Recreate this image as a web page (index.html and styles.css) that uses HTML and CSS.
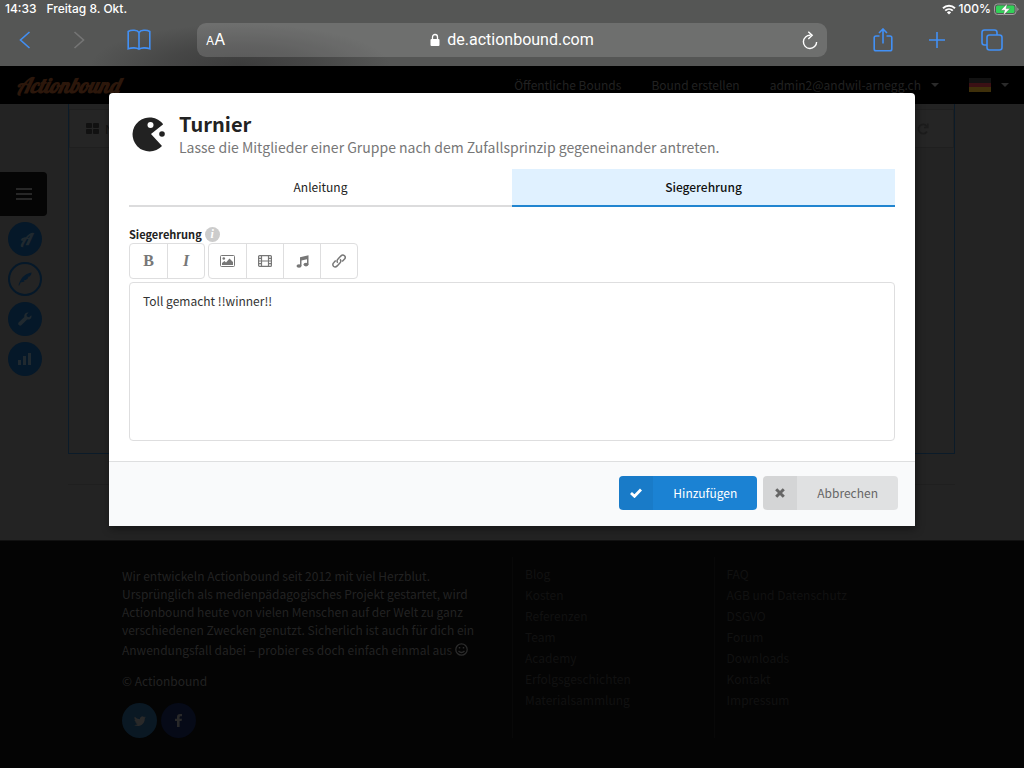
FILE: index.html
```html
<!DOCTYPE html>
<html lang="de">
<head>
  <meta charset="UTF-8" />
  <meta name="viewport" content="width=device-width, initial-scale=1" />
  <title>Actionbound</title>
  <link rel="stylesheet" href="styles.css">
</head>
<body>

  <header class="chrome">
    <div class="status">
      <span>14:33</span>
      <span>Freitag 8. Okt.</span>
      <span class="status-right">
        <svg width="14" height="11" viewBox="0 0 14 11" fill="none" stroke="#fff" stroke-width="1.9"><path d="M1 4.2a8.6 8.6 0 0 1 12 0M3.2 6.6a5.5 5.5 0 0 1 7.6 0"/><path d="M7 10.5L4.9 8.4a3 3 0 0 1 4.2 0z" fill="#fff" stroke="none"/></svg>
        <span>100%</span>
        <svg width="25" height="13" viewBox="0 0 25 13"><rect x=".5" y="1" width="21.5" height="10.500" rx="3" fill="none" stroke="#a0a0a0"/><rect x="2" y="2.500" width="18.500" height="7.500" rx="1.500" fill="#32d158"/><path d="M23.300 4.500v3.500q1.200-.5 1.200-1.750t-1.200-1.750z" fill="#a0a0a0"/><path d="M13.300.5L6.800 7.200h3.800L9.300 12.500l6.700-6.900h-3.900z" fill="#fff" stroke="#555" stroke-width=".4"/></svg>
      </span>
    </div>
    <div class="toolbar">
      <div class="tools">
        <button class="tool" aria-label="Zurück"><svg width="12" height="18" viewBox="0 0 12 18"><path d="M10.500 1L1.500 9l9 8"/></svg></button>
        <button class="tool tool-off" aria-label="Vorwärts"><svg width="12" height="18" viewBox="0 0 12 18"><path d="M1.500 1l9 8-9 8"/></svg></button>
        <button class="tool" aria-label="Lesezeichen"><svg width="24" height="22" viewBox="0 0 24 22"><path d="M12 3.500C10.500 1 4.500.5 1.200 2.500v17.300c3.500-1.300 8.500-1.300 10.800.4 2.300-1.700 7.300-1.700 10.800-.4V2.500C19.500.5 13.500 1 12 3.500zM12 3.500v16.500"/></svg></button>
      </div>
      <div class="address">
        <button class="reader" aria-label="Textgröße"><small>A</small>A</button>
        <a class="url" href="#"><svg width="10" height="14" viewBox="0 0 10 14"><rect x=".5" y="6" width="9" height="7" rx="1" fill="#fff"/><path d="M2.500 6.500V4a2.500 2.500 0 0 1 5 0v2.500" fill="none" stroke="#fff" stroke-width="1.300"/></svg>de.actionbound.com</a>
        <button class="reload" aria-label="Neu laden"><svg width="16" height="19" viewBox="0 0 16 19" fill="none" stroke="#fff" stroke-width="1.400"><path d="M8.500 4.300a6.600 6.600 0 1 0 6.100 6.600M6.300.8l3.900 3.500-3.900 3.700"/></svg></button>
      </div>
      <div class="tools tools-right">
        <button class="tool" aria-label="Teilen"><svg width="20" height="24" viewBox="0 0 20 24"><path d="M6.500 8H3Q1.200 8 1.200 9.800V21Q1.200 22.800 3 22.800H17Q18.800 22.800 18.800 21V9.800Q18.800 8 17 8H13.500M10 15.500V1.500M6 5l4-4 4 4"/></svg></button>
        <button class="tool" aria-label="Neuer Tab"><svg width="18" height="18" viewBox="0 0 18 18"><path d="M9 1v16M1 9h16"/></svg></button>
        <button class="tool" aria-label="Tabs"><svg width="22" height="22" viewBox="0 0 22 22"><rect x="6" y="6" width="15" height="15" rx="2.500"/><path d="M6 16H3.500Q1 16 1 13.500V3.500Q1 1 3.500 1H13.500Q16 1 16 3.500V6"/></svg></button>
      </div>
    </div>
  </header>

  <div class="page">
    <nav class="navbar">
      <a class="logo" href="#">Actionbound</a>
      <div class="nav-links">
        <a href="#">Öffentliche Bounds</a>
        <a href="#">Bound erstellen</a>
        <a href="#">admin2@andwil-arnegg.ch <i class="caret"></i></a>
        <a href="#" aria-label="Sprache"><span class="flag"></span> <i class="caret"></i></a>
      </div>
    </nav>

    <main class="main">
      <aside class="sidebar">
        <button class="burger" aria-label="Menü"><svg width="16" height="12" viewBox="0 0 16 12" stroke="#272727" stroke-width="2"><path d="M0 1h16M0 6h16M0 11h16"/></svg></button>
        <a class="round letter" href="#">A</a>
        <a class="round round-active" href="#" aria-label="Bearbeiten"><svg width="14" height="14" viewBox="0 0 14 14" fill="#061a2c"><path d="M.5 13.500C2 7.500 5.500 2 13.500.5c0 2-1 3.300-2 4l-2.500.6 1.500.4c-.8 1.300-1.800 2-2.800 2.600l-2.200.2 1.200.6C5.300 10 4 10.300 2.800 10.300L1.200 13.500z"/></svg></a>
        <a class="round" href="#" aria-label="Einstellungen"><svg width="14" height="14" viewBox="0 0 14 14"><path d="M13.300 3.200L11 5.200 8.900 4.600 8.500 2.700 10.700.5C8 0 5.700 2.200 6.300 5L.8 10.300a1.900 1.900 0 0 0 2.800 2.800L9.200 7.500c2.800.6 5-1.700 4.100-4.300z" fill="#20292f"/></svg></a>
        <a class="round" href="#" aria-label="Resultate"><svg width="14" height="14" viewBox="0 0 14 14" fill="#20292f"><path d="M0 8h3v5H0zM5 4h3v9H5zM10 1h3v12h-3z"/></svg></a>
      </aside>
      <div class="content">
        <section class="board">
          <div class="board-bar">
            <svg width="13" height="11" viewBox="0 0 13 11" fill="#111"><rect width="6" height="5" rx="1"/><rect x="7" width="6" height="5" rx="1"/><rect y="6" width="6" height="5" rx="1"/><rect x="7" y="6" width="6" height="5" rx="1"/></svg>
            <span>Neu</span>
            <svg class="board-reload" width="12" height="12" viewBox="0 0 12 12" fill="none" stroke="#1c1c1c" stroke-width="1.700"><path d="M10 8.500a4.600 4.600 0 1 1-.3-5.300M10.800.5v4H7"/></svg>
          </div>
        </section>
        <hr>
      </div>
    </main>

    <footer class="footer">
      <div class="footer-grid">
        <div class="about">
          <p>Wir entwickeln Actionbound seit 2012 mit viel Herzblut. Ursprünglich als medienpädagogisches Projekt gestartet, wird Actionbound heute von vielen Menschen auf der Welt zu ganz verschiedenen Zwecken genutzt. Sicherlich ist auch für dich ein Anwendungsfall dabei – probier es doch einfach einmal aus <svg class="smile" width="13" height="13" viewBox="0 0 13 13" fill="none" stroke="#2b2b2b" stroke-width="1.300"><circle cx="6.500" cy="6.500" r="5.700"/><path d="M3.500 8q3 3 6 0"/><path d="M4.500 4v1.500M8.500 4v1.500" stroke-width="1.500"/></svg></p>
          <p>© Actionbound</p>
          <div class="social">
            <a class="twitter" href="#" aria-label="Twitter"><svg width="12" height="10" viewBox="0 0 12 10" fill="#292929"><path d="M12 1.200l-1.200 1.300C10.900 7 7.500 10 3.800 10 2.400 10 1.100 9.600 0 8.900c1.300.1 2.600-.2 3.600-1A2.500 2.500 0 0 1 1.300 6.200h1.100A2.500 2.500 0 0 1 .4 3.700l1.100.3A2.500 2.500 0 0 1 .8.700a7 7 0 0 0 5.100 2.600A2.500 2.500 0 0 1 10 1l1.600-.6-1.100 1.400z"/></svg></a>
            <a class="facebook" href="#" aria-label="Facebook"><svg width="7" height="13" viewBox="0 0 7 13" fill="#292929"><path d="M2 13V7H0V4.700h2V3Q2 0 5 0h2v2.200H5.600Q4.600 2.200 4.600 3.200v1.500H7L6.600 7h-2v6z"/></svg></a>
          </div>
        </div>
        <ul>
          <li><a href="#">Blog</a></li>
          <li><a href="#">Kosten</a></li>
          <li><a href="#">Referenzen</a></li>
          <li><a href="#">Team</a></li>
          <li><a href="#">Academy</a></li>
          <li><a href="#">Erfolgsgeschichten</a></li>
          <li><a href="#">Materialsammlung</a></li>
        </ul>
        <ul>
          <li><a href="#">FAQ</a></li>
          <li><a href="#">AGB und Datenschutz</a></li>
          <li><a href="#">DSGVO</a></li>
          <li><a href="#">Forum</a></li>
          <li><a href="#">Downloads</a></li>
          <li><a href="#">Kontakt</a></li>
          <li><a href="#">Impressum</a></li>
        </ul>
      </div>
    </footer>

    <div class="dimmer">
      <div class="modal" role="dialog" aria-labelledby="modal-title">
        <div class="modal-body">
          <div class="modal-head">
            <svg width="34" height="36" viewBox="0 0 34 36"><path d="M19 18L31.200 8.300A17 17 0 1 0 30 30z" fill="#222"/><circle cx="18.500" cy="9" r="3" fill="#fff"/><circle cx="30" cy="18" r="2.800" fill="#222"/></svg>
            <div>
              <h1 id="modal-title">Turnier</h1>
              <p>Lasse die Mitglieder einer Gruppe nach dem Zufallsprinzip gegeneinander antreten.</p>
            </div>
          </div>

          <div class="tabs">
            <button class="tab">Anleitung</button>
            <button class="tab tab-active">Siegerehrung</button>
          </div>

          <div class="field-label">
            <label for="award">Siegerehrung</label>
            <span class="info">i</span>
          </div>
          <div class="editor-bar">
            <div class="group">
              <button class="bold">B</button>
              <button class="italic">I</button>
            </div>
            <div class="group">
              <button aria-label="Bild"><svg width="15" height="12" viewBox="0 0 15 12"><rect x=".5" y=".5" width="14" height="11" rx="1" fill="none" stroke="#777"/><circle cx="3.800" cy="3.500" r="1.300" fill="#777"/><path d="M2 10V8l2.500-2L6 7.500 9.500 3.500 13 7v3z" fill="#777"/></svg></button>
              <button aria-label="Video"><svg width="14" height="12" viewBox="0 0 14 12" fill="none" stroke="#777" stroke-width="1.200"><rect x=".6" y=".6" width="12.800" height="10.800" rx="1"/><path d="M3.500.6v10.800M10.500.6v10.800M3.500 6h7M.6 3.300h2.900M.6 6h2.900M.6 8.700h2.900M10.500 3.300h2.900M10.500 6h2.900M10.500 8.700h2.900"/></svg></button>
              <button aria-label="Audio"><svg width="13" height="13" viewBox="0 0 13 13" fill="#777"><path d="M4 2.200L12.500.3V9.500H11V4.200L5.500 5.500v5.500H4z"/><ellipse cx="3" cy="11" rx="2.500" ry="1.800"/><ellipse cx="10" cy="9.600" rx="2.500" ry="1.800"/></svg></button>
              <button aria-label="Link"><svg width="14" height="14" viewBox="0 0 14 14" fill="none" stroke="#777" stroke-width="1.500"><path d="M5.800 8.800C4.700 7.700 4.900 6.200 5.800 5.300L8.800 2.100C10 .9 11.500.9 12.500 1.800c1 1 .8 2.500-.2 3.500L10.200 7.500M8 5.300c1.200 1 1 2.600.1 3.500L5.200 11.900c-1.200 1.200-2.700 1.200-3.700.3-1-1-.8-2.500.2-3.500L3.700 6.600"/></svg></button>
            </div>
          </div>
          <textarea id="award">Toll gemacht !!winner!!</textarea>
        </div>
        <div class="modal-foot">
          <button class="btn btn-primary"><span class="btn-icon"><svg width="12" height="10" viewBox="0 0 12 10"><path d="M1 5l3.500 3.300L11 1.500" fill="none" stroke="#fff" stroke-width="2.800"/></svg></span><span class="btn-text">Hinzufügen</span></button>
          <button class="btn"><span class="btn-icon"><svg width="10" height="10" viewBox="0 0 10 10"><path d="M1.200 1.200l7.600 7.600M8.800 1.200L1.200 8.800" stroke="#666" stroke-width="3"/></svg></span><span class="btn-text">Abbrechen</span></button>
        </div>
      </div>
    </div>
  </div>

</body>
</html>
```
FILE: styles.css
```css
* { box-sizing: border-box; }
body {
  margin: 0;
  background: #040404;
  font-family: "Noto Sans CJK SC", "Noto Sans", sans-serif;
  font-size: 12px;
  line-height: 18px;
  color: #222;
}
a { color: inherit; text-decoration: none; }
button {
  font: inherit;
  color: inherit;
  background: none;
  border: 0;
  padding: 0;
  cursor: pointer;
}
svg { flex: none; }

/* browser bar */
.chrome {
  height: 66px;
  background: radial-gradient(ellipse 150px 42px at 240px 66px, #3c3c3c, rgba(60, 60, 60, 0.6) 50%, transparent), #555655;
  font-family: Inter, sans-serif;
  color: #fff;
}
.status {
  display: flex;
  gap: 10px;
  padding: 0 5px;
  font-weight: 500;
}
.status-right {
  display: flex;
  align-items: center;
  gap: 3px;
  margin-left: auto;
}
.toolbar {
  display: flex;
  align-items: center;
  gap: 46px;
  padding: 5px 21px 0 19px;
}
.tools {
  display: flex;
  align-items: center;
  gap: 42px;
}
.tools-right { gap: 35px; }
.tool { display: flex; }
.tool svg {
  fill: none;
  stroke: #4290f5;
  stroke-width: 1.6;
}
.tool-off svg { stroke: #757575; }
.address {
  flex: 1;
  display: flex;
  align-items: center;
  height: 34px;
  padding: 0 9px;
  border-radius: 9px;
  background: rgba(255, 255, 255, 0.15);
}
.reader {
  flex: 1;
  font-size: 16px;
  text-align: left;
}
.reader small { font-size: 12px; }
.url {
  display: flex;
  align-items: center;
  gap: 7px;
  font-family: Roboto, sans-serif;
  font-size: 16px;
}
.reload {
  flex: 1;
  display: flex;
  justify-content: flex-end;
}

/* site */
.page { position: relative; }
.navbar {
  display: flex;
  align-items: center;
  justify-content: space-between;
  height: 38px;
  padding: 0 15px 0 16px;
  background: #000;
  color: #222;
}
.logo {
  font-family: Lobster, "Liberation Serif", serif;
  font-size: 21px;
  font-style: italic;
  font-weight: bold;
  color: #2c170b;
}
.nav-links { display: flex; gap: 30px; }
.nav-links a { display: flex; align-items: center; }
.caret {
  margin-left: 10px;
  border: 4px solid transparent;
  border-top-color: #2a2a2a;
  border-bottom: 0;
}
.flag {
  width: 22px;
  height: 14px;
  background: linear-gradient(#121212 33%, #3a1014 33%, #3a1014 66%, #3f300b 66%);
}
.main {
  display: flex;
  min-height: 436px;
  padding-right: 69px;
  background: #232323;
}
.sidebar {
  display: flex;
  flex-direction: column;
  gap: 6px;
  width: 68px;
  padding-top: 68px;
}
.burger {
  display: flex;
  align-items: center;
  justify-content: center;
  width: 47px;
  height: 44px;
  border-radius: 0 4px 4px 0;
  background: #050505;
}
.round {
  display: flex;
  align-items: center;
  justify-content: center;
  width: 34px;
  height: 34px;
  margin-left: 8px;
  border-radius: 50%;
  background: #051829;
}
.letter {
  font: italic bold 16px Lobster, "Liberation Serif", serif;
  color: #20292f;
}
.round-active {
  border: 2px solid #051829;
  background: #242424;
}
.content { flex: 1; }
.board {
  height: 350px;
  padding-top: 5px;
  border: 1px solid #0b1b29;
  border-top: 0;
}
.board-bar {
  display: flex;
  align-items: center;
  gap: 6px;
  height: 39px;
  padding: 0 24px 0 16px;
  border: 1px solid #1f1f1f;
  background: #252525;
  color: #111;
}
.board-reload { margin-left: auto; }
.content hr {
  margin: 30px 0 0;
  border: 0;
  border-top: 1px solid #1f1f1f;
}
.footer {
  padding: 16px 20px 24px;
  border-top: 1px solid #111;
  background: #040404;
  color: #222;
}
.footer-grid {
  display: grid;
  grid-template-columns: 2fr 1fr 1fr;
  max-width: 806px;
  margin: 0 auto;
}
.about { padding: 10px 34px 0 13px; }
.about p { margin: 0 0 13px; }
.smile {
  margin-top: 4px;
  vertical-align: -1px;
}
.footer ul {
  margin: 0;
  padding: 6px 12px;
  border-left: 1px solid #080808;
  list-style: none;
  line-height: 21px;
  color: #111;
}
.social { display: flex; gap: 4px; }
.social a {
  display: flex;
  align-items: center;
  justify-content: center;
  width: 35px;
  height: 35px;
  border-radius: 50%;
}
.twitter { background: #0a1823; }
.facebook { background: #060a17; }

/* modal */
.dimmer {
  position: absolute;
  top: 0;
  left: 0;
  right: 0;
  padding: 27px 20px;
}
.modal {
  max-width: 806px;
  margin: 0 auto;
  border-radius: 4px 4px 0 0;
  background: #fff;
  box-shadow: 1px 3px 8px rgba(0, 0, 0, 0.4);
}
.modal-body { padding: 17px 20px 20px; }
.modal-head {
  display: flex;
  align-items: center;
  gap: 13px;
  padding: 0 3px;
  height: 48px;
}
.modal-head h1 {
  margin: 0;
  font-size: 20px;
  line-height: 26px;
  font-weight: 600;
}
.modal-head p {
  margin: 0;
  font-size: 14px;
  line-height: 20px;
  color: #777;
}
.tabs {
  display: flex;
  margin-top: 11px;
}
.tab {
  flex: 1;
  height: 38px;
  border-bottom: 2px solid #dcdcdd;
}
.tab-active {
  border-color: #2185d0;
  background: #e0f1ff;
  color: #111;
  font-weight: 500;
}
.field-label {
  display: flex;
  align-items: center;
  gap: 3px;
  margin-top: 18px;
  font-size: 11px;
  font-weight: 600;
}
.info {
  width: 15px;
  height: 15px;
  border-radius: 50%;
  background: #ccc;
  color: #fff;
  font: italic bold 12px/15px "Liberation Serif", serif;
  text-align: center;
}
.editor-bar { display: flex; gap: 3px; }
.group {
  display: flex;
  border: 1px solid #dededf;
  border-radius: 4px;
}
.group button {
  display: flex;
  align-items: center;
  justify-content: center;
  width: 37px;
  height: 34px;
  color: #777;
  font-family: "Liberation Serif", serif;
  font-size: 16px;
  font-weight: bold;
}
.group button + button { border-left: 1px solid #dededf; }
.group .italic { font-style: italic; }
textarea {
  display: block;
  width: 100%;
  height: 159px;
  margin-top: 3px;
  padding: 9px 13px;
  border: 1px solid #dededf;
  border-radius: 4px;
  background: #fff;
  color: #333;
  font: inherit;
  resize: none;
}
.modal-foot {
  display: flex;
  justify-content: flex-end;
  gap: 6px;
  padding: 14px 17px 16px;
  border-top: 1px solid #dedfe0;
  background: #f9fafb;
}
.btn {
  display: flex;
  height: 34px;
  border-radius: 4px;
  background: #e0e1e2;
  color: #666;
  overflow: hidden;
}
.btn-icon {
  display: flex;
  align-items: center;
  justify-content: center;
  width: 34px;
  height: 34px;
  background: rgba(0, 0, 0, 0.05);
}
.btn-text { padding: 8px 20px; }
.btn-primary {
  background: #1b82d3;
  color: #fff;
}
```
